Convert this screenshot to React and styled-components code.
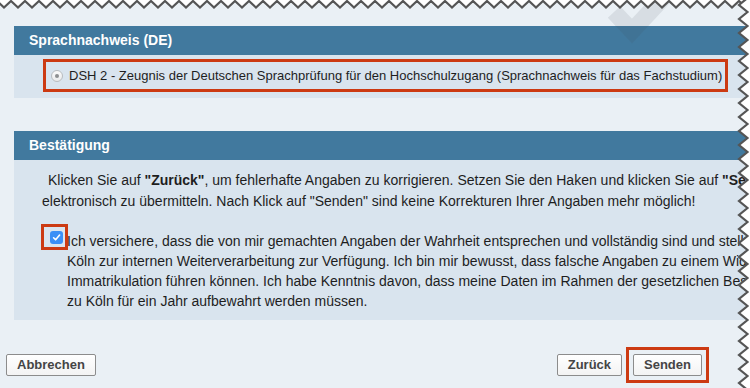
import React from 'react';
import styled, { createGlobalStyle } from 'styled-components';

const GlobalStyle = createGlobalStyle`
  html, body { margin: 0; padding: 0; background: #eaf0f5; }
  body {
    width: 750px; height: 388px; overflow: hidden;
    font-family: "Liberation Sans", Arial, Helvetica, sans-serif;
    color: #1e1e1e;
  }
`;

const Page = styled.div`
  position: relative;
  box-sizing: border-box;
  width: 750px;
  height: 388px;
  overflow: hidden;
  background: #eaf0f5;
  padding-top: 26px;
`;

const Section = styled.section`
  margin-left: 14px;
  width: 900px;
  margin-bottom: ${(p) => p.$gap || 0}px;
`;

const Header = styled.div`
  height: 29px;
  line-height: 29px;
  padding-left: 15px;
  background: #41799e;
  color: #fff;
  font-weight: bold;
  font-size: 14px;
`;

const Body = styled.div`
  background: #d9e4ee;
  padding: ${(p) => p.$pad};
  font-size: ${(p) => p.$fs || 14}px;
`;

const Marked = styled.div`
  display: inline-flex;
  align-items: center;
  box-sizing: border-box;
  height: ${(p) => p.$h}px;
  width: ${(p) => (p.$w ? `${p.$w}px` : 'auto')};
  padding: ${(p) => p.$pad};
  border: 3px solid #cc3a12;
  flex: none;
`;

const Radio = styled.span`
  position: relative;
  box-sizing: border-box;
  width: 12px;
  height: 12px;
  border-radius: 50%;
  border: 1px solid #b9bcbf;
  background: linear-gradient(#fbfbfb, #e9eaeb);
  margin-right: 6px;
  flex: none;
  &::after {
    content: '';
    position: absolute;
    left: 3px; top: 3px;
    width: 4px; height: 4px;
    border-radius: 50%;
    background: #8d8f91;
  }
`;

const Para = styled.p`
  margin: 0;
  line-height: 21px;
  white-space: nowrap;
`;

const Indent = styled.span`
  padding-left: 6px;
`;

const CheckRow = styled.div`
  display: flex;
  align-items: flex-start;
  margin: 12px 0 0 -1px;
`;

const CheckBox = styled.span`
  display: flex;
  align-items: center;
  justify-content: center;
  width: 13px;
  height: 13px;
  border-radius: 3px;
  background: #3a8ff6;
`;

const CheckText = styled.p`
  margin: 7px 0 0 -1px;
  line-height: 20px;
  white-space: nowrap;
`;

const ButtonBar = styled.div`
  display: flex;
  align-items: center;
  justify-content: space-between;
  margin-top: 27px;
  padding: 0 41px 0 6px;
`;

const RightGroup = styled.div`
  display: flex;
  align-items: center;
  gap: 4px;
`;

const Button = styled.button`
  box-sizing: border-box;
  height: 22px;
  padding: 0 10px;
  margin: 0;
  border: 1px solid #8c8c8c;
  border-radius: 2px;
  background: linear-gradient(#ffffff, #f3f3f3);
  color: #454545;
  font-family: "Liberation Sans", Arial, Helvetica, sans-serif;
  font-weight: bold;
  font-size: 13px;
  line-height: 20px;
`;

const Overlay = styled.svg`
  position: absolute;
  left: 0;
  top: 0;
  pointer-events: none;
`;

function zigTop() {
  const pts = [];
  for (let i = 0, x = -3; x <= 760; i++, x += 7) {
    pts.push(`${x},${i % 2 === 0 ? 1 : 7.5}`);
  }
  return pts;
}

function zigRight() {
  const pts = [];
  for (let i = 0, y = -2; y <= 400; i++, y += 7) {
    pts.push(`${i % 2 === 0 ? 747.5 : 739}` + `,${y}`);
  }
  return pts;
}

export default function App() {
  const top = zigTop();
  const right = zigRight();
  return (
    <>
      <GlobalStyle />
      <Page>
        <Section $gap={33}>
          <Header>Sprachnachweis (DE)</Header>
          <Body $pad="4px 0 6px 29px" $fs={13}>
            <Marked $h={33} $pad="0 3px 0 5px">
              <Radio />
              DSH 2 - Zeugnis der Deutschen Sprachprüfung für den Hochschulzugang (Sprachnachweis für das Fachstudium)
            </Marked>
          </Body>
        </Section>

        <Section>
          <Header>Bestätigung</Header>
          <Body $pad="10px 0 9px 28px">
            <Para>
              <Indent>Klicken Sie auf <b>"Zurück"</b>, um fehlerhafte Angaben zu korrigieren. Setzen Sie den Haken und klicken Sie auf <b>"Senden"</b>, um Ihre Angaben</Indent>
              <br />
              elektronisch zu übermitteln. Nach Klick auf "Senden" sind keine Korrekturen Ihrer Angaben mehr möglich!
            </Para>
            <CheckRow>
              <Marked $h={26} $w={27} $pad="0 0 0 6px">
                <CheckBox>
                  <svg width="9" height="9" viewBox="0 0 9 9">
                    <path d="M1.6 4.8 L3.6 6.8 L7.6 2" fill="none" stroke="#fff" strokeWidth="1.6" strokeLinecap="round" strokeLinejoin="round" />
                  </svg>
                </CheckBox>
              </Marked>
              <CheckText>
                Ich versichere, dass die von mir gemachten Angaben der Wahrheit entsprechen und vollständig sind und stelle diese der Universität zu
                <br />
                Köln zur internen Weiterverarbeitung zur Verfügung. Ich bin mir bewusst, dass falsche Angaben zu einem Widerruf der
                <br />
                Immatrikulation führen können. Ich habe Kenntnis davon, dass meine Daten im Rahmen der gesetzlichen Bestimmungen von der Universität
                <br />
                zu Köln für ein Jahr aufbewahrt werden müssen.
              </CheckText>
            </CheckRow>
          </Body>
        </Section>

        <ButtonBar>
          <Button>Abbrechen</Button>
          <RightGroup>
            <Button>Zurück</Button>
            <Marked $h={36} $pad="0 4px">
              <Button>Senden</Button>
            </Marked>
          </RightGroup>
        </ButtonBar>

        <Overlay width="750" height="388" viewBox="0 0 750 388">
          <polyline points="614,12 632,31 674,-14" fill="none" stroke="rgba(60,70,80,0.11)" strokeWidth="17" strokeLinejoin="miter" />
          <polygon points={`-3,-5 ${top.join(' ')} 760,-5`} fill="#ffffff" />
          <polyline points={top.join(' ')} fill="none" stroke="#555555" strokeWidth="2.2" />
          <polygon points={`760,-5 ${right.join(' ')} 760,400`} fill="#ffffff" />
          <polyline points={right.join(' ')} fill="none" stroke="#555555" strokeWidth="2.2" />
        </Overlay>
      </Page>
    </>
  );
}
